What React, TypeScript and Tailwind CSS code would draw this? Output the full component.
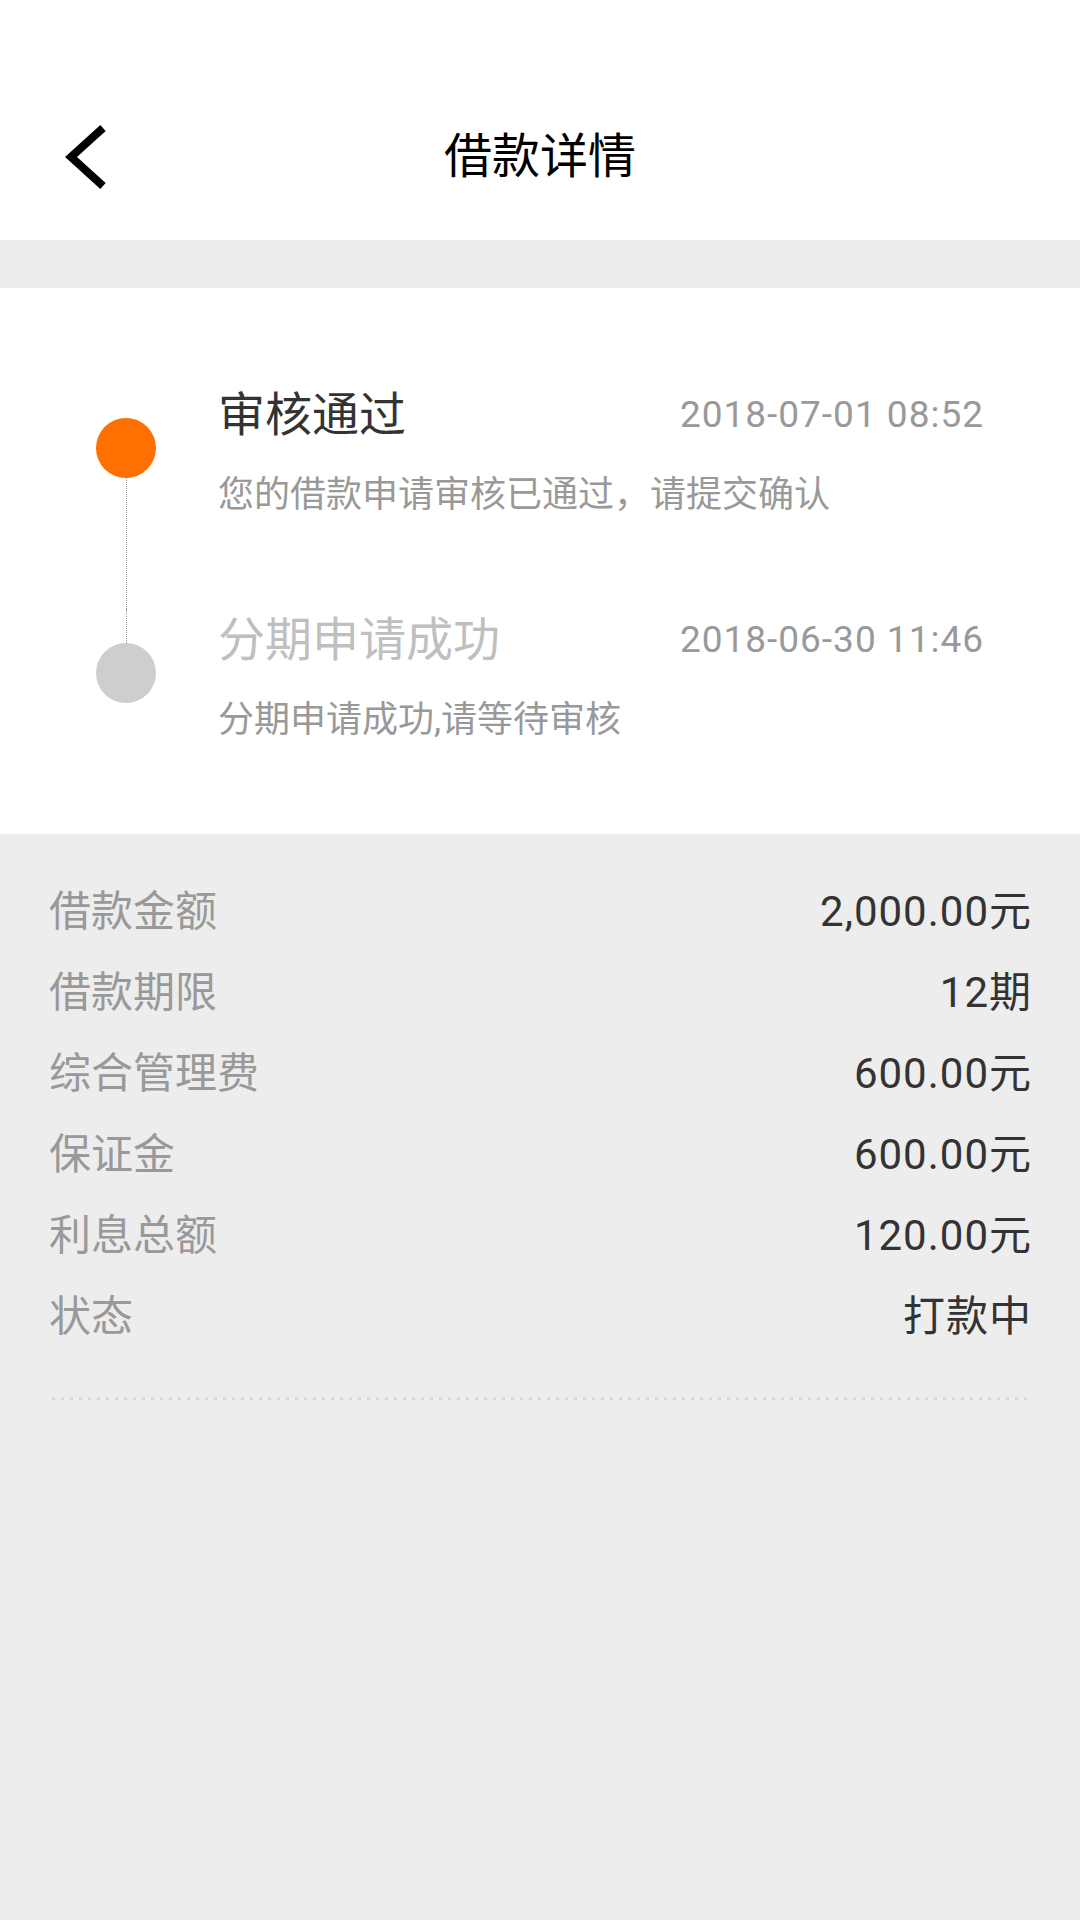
import React from "react";

const FONT = { fontFamily: 'Roboto, "Noto Sans CJK SC", sans-serif' };

type Step = {
  title: string;
  time: string;
  desc: string;
  active: boolean;
};

const steps: Step[] = [
  { title: "审核通过", time: "2018-07-01 08:52", desc: "您的借款申请审核已通过，请提交确认", active: true },
  { title: "分期申请成功", time: "2018-06-30 11:46", desc: "分期申请成功,请等待审核", active: false },
];

const details: [string, string][] = [
  ["借款金额", "2,000.00元"],
  ["借款期限", "12期"],
  ["综合管理费", "600.00元"],
  ["保证金", "600.00元"],
  ["利息总额", "120.00元"],
  ["状态", "打款中"],
];

export default function App() {
  return (
    <div className="w-[1080px] min-h-[1920px] bg-[#ededed] flex flex-col" style={FONT}>
      {/* Header */}
      <div className="bg-white h-[240px] pt-[118px]">
        <div className="grid grid-cols-[1fr_auto_1fr] h-[78px] items-center">
          <div className="pl-[63px] flex items-center">
            <svg width="46" height="64" viewBox="0 0 46 64" fill="none">
              <polyline points="40,3 8,32 40,61" stroke="#000" strokeWidth="8" strokeLinejoin="miter" strokeLinecap="butt" />
            </svg>
          </div>
          <div className="text-[48px] leading-none text-black">借款详情</div>
          <div />
        </div>
      </div>

      <div className="h-[48px] bg-[#ededed]" />

      {/* Timeline */}
      <div className="bg-white pt-[96px] pb-[89px] pl-[96px] pr-[96px] flex flex-col">
        {steps.map((s, i) => {
          const first = i === 0;
          const last = i === steps.length - 1;
          return (
            <div key={i} className="flex">
              <div className="w-[60px] flex flex-col items-center shrink-0">
                <div className={`h-[34px] ${first ? "" : "border-l border-dotted border-[#999999]"}`} />
                <div className={`w-[60px] h-[60px] rounded-full ${s.active ? "bg-[#ff7000]" : "bg-[#cecece]"}`} />
                <div className={`flex-1 ${last ? "" : "border-l border-dotted border-[#999999]"}`} />
              </div>
              <div className={`flex-1 ml-[62px] ${last ? "" : "pb-[89px]"}`}>
                <div className="flex items-center justify-between h-[60px]">
                  <span className={`text-[47px] leading-none ${s.active ? "text-[#333333]" : "text-[#bfbfbf]"}`}>{s.title}</span>
                  <span className="text-[37px] leading-none tracking-[1px] text-[#999999]">{s.time}</span>
                </div>
                <div className="mt-[26px] h-[50px] flex items-center text-[36px] leading-none text-[#999999]">{s.desc}</div>
              </div>
            </div>
          );
        })}
      </div>

      {/* Details */}
      <div className="pl-[49px] pr-[48px] pt-[37px]">
        {details.map(([k, v]) => (
          <div key={k} className="h-[81px] flex items-center justify-between text-[42px] leading-none">
            <span className="text-[#999999]">{k}</span>
            <span className="text-[#333333] tracking-[1px]">{v}</span>
          </div>
        ))}
        <div className="mt-[40px] mr-[1px] h-[3px] bg-[radial-gradient(circle,#d8d8d8_1.5px,transparent_1.6px)] bg-[length:9px_3px]" />
      </div>
    </div>
  );
}
